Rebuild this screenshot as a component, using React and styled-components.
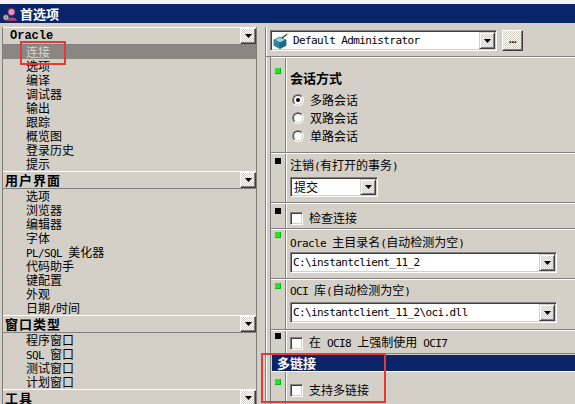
import React from 'react';
import styled, { createGlobalStyle } from 'styled-components';

const CJK = `"Noto Sans CJK SC", "Liberation Sans", sans-serif`;
const MONO = `"DejaVu Sans Mono", "Liberation Mono", "Noto Sans CJK SC", monospace`;

const GlobalStyle = createGlobalStyle`
  html, body { margin: 0; padding: 0; background: #d4d0c8; }
  body { font-family: ${CJK}; font-size: 12px; color: #000; }
`;

const Window = styled.div`
  position: relative;
  width: 575px;
  height: 404px;
  overflow: hidden;
  display: flex;
  flex-direction: column;
  background: #d4d0c8;
`;

const TopStrip = styled.div`
  flex: none;
  height: 4px;
  background: #f2f2f2;
`;

const TitleBar = styled.div`
  flex: none;
  height: 19px;
  background: #0a246a;
  display: flex;
  align-items: center;
  gap: 2px;
  padding-left: 2px;
  color: #fff;
  font-weight: bold;
  font-size: 13px;
  line-height: 19px;
`;

const Main = styled.div`
  flex: 1;
  min-height: 0;
  display: flex;
  padding-top: 4px;
`;

/* ---------- left panel ---------- */
const LeftPanel = styled.div`
  flex: none;
  width: 255px;
  margin-left: 2px;
  box-sizing: border-box;
  border-left: 1px solid #808080;
  border-right: 1px solid #808080;
  display: flex;
  flex-direction: column;
`;

const GroupHeader = styled.div`
  flex: none;
  height: 18px;
  box-sizing: border-box;
  border-top: 1px solid #fff;
  border-bottom: 1px solid #808080;
  display: flex;
  align-items: center;
  justify-content: space-between;
  padding-left: 2px;
`;

const GroupTitle = styled.span`
  font-weight: bold;
  font-family: ${p => (p.$mono ? `"Liberation Mono", monospace` : CJK)};
  font-size: ${p => (p.$mono ? '12px' : '13px')};
  letter-spacing: ${p => (p.$mono ? '0' : '1px')};
  padding-left: ${p => (p.$mono ? '5px' : '0')};
  line-height: 16px;
`;

const Item = styled.div`
  flex: none;
  height: 14px;
  line-height: 14px;
  padding-left: 23px;
  white-space: pre;
  background: ${p => (p.$selected ? '#8a8682' : 'transparent')};
  color: ${p => (p.$selected ? '#dcd8d0' : '#000')};
`;

const DitherButton = styled.div`
  flex: none;
  width: ${p => p.$w || 16}px;
  height: ${p => p.$h || 16}px;
  box-sizing: border-box;
  display: flex;
  align-items: center;
  justify-content: center;
  border: 1px solid;
  border-color: #fff #404040 #404040 #fff;
  box-shadow: inset -1px -1px #808080;
  background: repeating-conic-gradient(#ffffff 0 25%, #d4d0c8 0 50%) 0 0 / 2px 2px;
`;

/* ---------- right panel ---------- */
const RightPanel = styled.div`
  flex: 1;
  min-width: 0;
  margin-left: 8px;
  display: flex;
  flex-direction: column;
  border-left: 1px solid #808080;
  box-shadow: inset 1px 0 #fff;
`;

const TopBar = styled.div`
  flex: none;
  height: 30px;
  box-sizing: border-box;
  padding: 3px 0 0 4px;
  border-bottom: 1px solid #808080;
  display: flex;
  align-items: flex-start;
  gap: 5px;
`;

const Field = styled.div`
  flex: none;
  width: ${p => p.$w}px;
  height: ${p => p.$h || 21}px;
  box-sizing: border-box;
  display: flex;
  align-items: stretch;
  background: #fff;
  border: 1px solid;
  border-color: #808080 #fff #fff #808080;
  box-shadow: inset 1px 1px #404040, inset -1px -1px #d4d0c8;
  padding: 1px;
`;

const FieldText = styled.span`
  flex: 1;
  display: flex;
  align-items: center;
  padding-left: ${p => p.$pad ?? 1}px;
  white-space: pre;
  line-height: 14px;
`;

const ArrowButton = styled.div`
  flex: none;
  width: 16px;
  box-sizing: border-box;
  display: flex;
  align-items: center;
  justify-content: center;
  border: 1px solid;
  border-color: #d4d0c8 #404040 #404040 #d4d0c8;
  box-shadow: inset 1px 1px #fff, inset -1px -1px #808080;
  background: repeating-conic-gradient(#f4f3f1 0 25%, #d4d0c8 0 50%) 0 0 / 2px 2px;
`;

const IconSlot = styled.span`
  flex: none;
  display: flex;
  align-items: center;
  margin: 0 4px 0 1px;
`;

const Dots = styled.span`
  font-family: "Liberation Sans", sans-serif;
  font-weight: bold;
  font-size: 11px;
  line-height: 8px;
  letter-spacing: -0.5px;
  padding-bottom: 4px;
`;

const SectionList = styled.div`
  flex: 1;
  min-height: 0;
  margin-left: 4px;
  border-left: 1px solid #808080;
  display: flex;
  flex-direction: column;
`;

const Section = styled.div`
  flex: none;
  height: ${p => p.$h}px;
  box-sizing: border-box;
  border-top: 1px solid #fff;
  border-bottom: ${p => (p.$last ? 'none' : '1px solid #808080')};
  display: flex;
`;

const Gutter = styled.div`
  flex: none;
  width: 14px;
  border-right: 1px solid #808080;
  box-sizing: content-box;
`;

const Indicator = styled.div`
  width: 6px;
  height: 6px;
  margin: ${p => p.$top}px 0 0 4px;
  background: ${p => (p.$green ? '#1ee81e' : '#000')};
  box-shadow: ${p => (p.$green ? 'inset -1px -1px #10b010' : 'none')};
`;

const Content = styled.div`
  flex: 1;
  min-width: 0;
  box-shadow: inset 1px 0 #fff;
  padding: ${p => p.$top}px 0 0 4px;
  display: flex;
  flex-direction: column;
  align-items: flex-start;
`;

const SectionTitle = styled.div`
  font-weight: bold;
  font-size: 13px;
  line-height: 15px;
`;

const Label = styled.div`
  line-height: 14px;
  white-space: pre;
`;

const RadioGroup = styled.div`
  margin-top: 6px;
  display: flex;
  flex-direction: column;
`;

const OptionRow = styled.label`
  height: ${p => p.$h || 18}px;
  display: flex;
  align-items: center;
  gap: 6px;
  padding-left: ${p => p.$indent || 0}px;
  line-height: 14px;
  white-space: pre;
`;

const RadioOuter = styled.span`
  width: 12px;
  height: 12px;
  box-sizing: border-box;
  border-radius: 50%;
  border: 1px solid;
  border-color: #808080 #fff #fff #808080;
  display: flex;
`;

const RadioInner = styled.span`
  flex: 1;
  border-radius: 50%;
  border: 1px solid;
  border-color: #404040 #d4d0c8 #d4d0c8 #404040;
  background: #fff;
  display: flex;
  align-items: center;
  justify-content: center;
`;

const RadioDot = styled.span`
  width: 4px;
  height: 4px;
  border-radius: 50%;
  background: #000;
`;

const CheckBox = styled.span`
  flex: none;
  width: 13px;
  height: 13px;
  box-sizing: border-box;
  background: #fff;
  border: 1px solid;
  border-color: #808080 #fff #fff #808080;
  box-shadow: inset 1px 1px #404040, inset -1px -1px #d4d0c8;
`;

const BarHeader = styled.div`
  flex: none;
  height: 16px;
  margin: 1px 0 0 1px;
  background: #0a246a;
  color: #fff;
  font-weight: bold;
  font-size: 13px;
  line-height: 16px;
  padding-left: 5px;
`;

const Mark = styled.div`
  position: absolute;
  left: ${p => p.$x}px;
  top: ${p => p.$y}px;
  width: ${p => p.$w}px;
  height: ${p => p.$h}px;
  box-sizing: border-box;
  border: 2px solid #e43a36;
  pointer-events: none;
`;

const Lat = styled.span`
  font-family: ${MONO};
  font-size: 11px;
  letter-spacing: -0.6px;
  white-space: pre;
`;

function Mixed({ text }) {
  const parts = text.split(/([\x20-\x7e]+)/).filter(Boolean);
  return parts.map((p, i) =>
    /^[\x20-\x7e]+$/.test(p) ? <Lat key={i}>{p}</Lat> : <React.Fragment key={i}>{p}</React.Fragment>
  );
}

const Arrow = () => (
  <svg width="7" height="4" viewBox="0 0 7 4">
    <polygon points="0,0 7,0 3.5,4" fill="#000" />
  </svg>
);

const TitleIcon = () => (
  <svg width="16" height="16" viewBox="0 0 16 16">
    <path d="M4 15 C4 10 15 10 15 15 Z" fill="#b04888" stroke="#5a1840" strokeWidth="0.8" />
    <circle cx="9.5" cy="6" r="3.6" fill="#e890c0" stroke="#6a2050" strokeWidth="0.8" />
    <path d="M6 4 Q9.5 1 13 4" fill="none" stroke="#7a3060" strokeWidth="1.2" />
    <circle cx="4" cy="11.5" r="2.8" fill="#c8c0c8" stroke="#505050" strokeWidth="0.8" />
    <circle cx="4" cy="11.5" r="1" fill="#606060" />
  </svg>
);

const ProfileIcon = () => (
  <svg width="16" height="16" viewBox="0 0 16 16">
    <polygon points="1,7 7,4 13,7 7,10" fill="#8de0d8" stroke="#1d4f7a" strokeWidth="0.7" />
    <polygon points="1,7 7,10 7,15.5 1,12.5" fill="#38a8b8" stroke="#1d4f7a" strokeWidth="0.7" />
    <polygon points="7,10 13,7 13,12.5 7,15.5" fill="#1f7aa0" stroke="#1d4f7a" strokeWidth="0.7" />
    <path d="M4 8.5 L4 14 M10 8.5 L10 14 M1 9.8 L7 12.8 L13 9.8" stroke="#1d4f7a" strokeWidth="0.6" fill="none" />
    <path d="M9 5 L15 0.5" stroke="#303030" strokeWidth="1.2" />
    <circle cx="14.5" cy="1" r="1" fill="#f0e060" />
  </svg>
);

const groups = [
  { title: 'Oracle', mono: true, items: ['连接', '选项', '编译', '调试器', '输出', '跟踪', '概览图', '登录历史', '提示'], selected: 0 },
  { title: '用户界面', items: ['选项', '浏览器', '编辑器', '字体', 'PL/SQL 美化器', '代码助手', '键配置', '外观', '日期/时间'] },
  { title: '窗口类型', items: ['程序窗口', 'SQL 窗口', '测试窗口', '计划窗口'] },
  { title: '工具', items: [] },
];

function Radio({ checked }) {
  return (
    <RadioOuter>
      <RadioInner>{checked && <RadioDot />}</RadioInner>
    </RadioOuter>
  );
}

export default function App() {
  return (
    <>
      <GlobalStyle />
      <Window>
        <TopStrip />
        <TitleBar>
          <TitleIcon />
          <span>首选项</span>
        </TitleBar>
        <Main>
          <LeftPanel>
            {groups.map(g => (
              <React.Fragment key={g.title}>
                <GroupHeader>
                  <GroupTitle $mono={g.mono}>{g.title}</GroupTitle>
                  <DitherButton>
                    <Arrow />
                  </DitherButton>
                </GroupHeader>
                {g.items.map((it, i) => (
                  <Item key={it} $selected={g.selected === i}>
                    <Mixed text={it} />
                  </Item>
                ))}
              </React.Fragment>
            ))}
          </LeftPanel>

          <RightPanel>
            <TopBar>
              <Field $w={227}>
                <IconSlot>
                  <ProfileIcon />
                </IconSlot>
                <FieldText $pad={0}>
                  <Lat>Default Administrator</Lat>
                </FieldText>
                <ArrowButton>
                  <Arrow />
                </ArrowButton>
              </Field>
              <DitherButton $w={21} $h={21}>
                <Dots>...</Dots>
              </DitherButton>
            </TopBar>

            <SectionList>
              <Section $h={96}>
                <Gutter>
                  <Indicator $green $top={10} />
                </Gutter>
                <Content $top={12}>
                  <SectionTitle>会话方式</SectionTitle>
                  <RadioGroup>
                    <OptionRow $indent={2}>
                      <Radio checked />
                      多路会话
                    </OptionRow>
                    <OptionRow $indent={2}>
                      <Radio />
                      双路会话
                    </OptionRow>
                    <OptionRow $indent={2}>
                      <Radio />
                      单路会话
                    </OptionRow>
                  </RadioGroup>
                </Content>
              </Section>

              <Section $h={50}>
                <Gutter>
                  <Indicator $top={4} />
                </Gutter>
                <Content $top={4}>
                  <Label>
                    注销<Mixed text="(" />有打开的事务<Mixed text=")" />
                  </Label>
                  <Field $w={88} $h={20} style={{ marginTop: 3 }}>
                    <FieldText $pad={2}>提交</FieldText>
                    <ArrowButton>
                      <Arrow />
                    </ArrowButton>
                  </Field>
                </Content>
              </Section>

              <Section $h={26}>
                <Gutter>
                  <Indicator $top={4} />
                </Gutter>
                <Content $top={7}>
                  <OptionRow $h={14}>
                    <CheckBox />
                    检查连接
                  </OptionRow>
                </Content>
              </Section>

              <Section $h={50}>
                <Gutter>
                  <Indicator $green $top={2} />
                </Gutter>
                <Content $top={5}>
                  <Label>
                    <Mixed text="Oracle 主目录名(自动检测为空)" />
                  </Label>
                  <Field $w={267} style={{ marginTop: 1 }}>
                    <FieldText>
                      <Lat>C:\instantclient_11_2</Lat>
                    </FieldText>
                    <ArrowButton>
                      <Arrow />
                    </ArrowButton>
                  </Field>
                </Content>
              </Section>

              <Section $h={51}>
                <Gutter>
                  <Indicator $green $top={3} />
                </Gutter>
                <Content $top={3}>
                  <Label>
                    <Mixed text="OCI 库(自动检测为空)" />
                  </Label>
                  <Field $w={267} style={{ marginTop: 3 }}>
                    <FieldText>
                      <Lat>C:\instantclient_11_2\oci.dll</Lat>
                    </FieldText>
                    <ArrowButton>
                      <Arrow />
                    </ArrowButton>
                  </Field>
                </Content>
              </Section>

              <Section $h={24}>
                <Gutter>
                  <Indicator $top={2} />
                </Gutter>
                <Content $top={5}>
                  <OptionRow $h={14}>
                    <CheckBox />
                    <span>
                      <Mixed text="在 OCI8 上强制使用 OCI7" />
                    </span>
                  </OptionRow>
                </Content>
              </Section>

              <BarHeader>多链接</BarHeader>

              <Section $h={40} $last>
                <Gutter>
                  <Indicator $green $top={7} />
                </Gutter>
                <Content $top={11}>
                  <OptionRow $h={14}>
                    <CheckBox />
                    支持多链接
                  </OptionRow>
                </Content>
              </Section>
            </SectionList>
          </RightPanel>
        </Main>

        <Mark $x={20} $y={41} $w={46} $h={24} />
        <Mark $x={261} $y={353} $w={125} $h={50} />
      </Window>
    </>
  );
}
